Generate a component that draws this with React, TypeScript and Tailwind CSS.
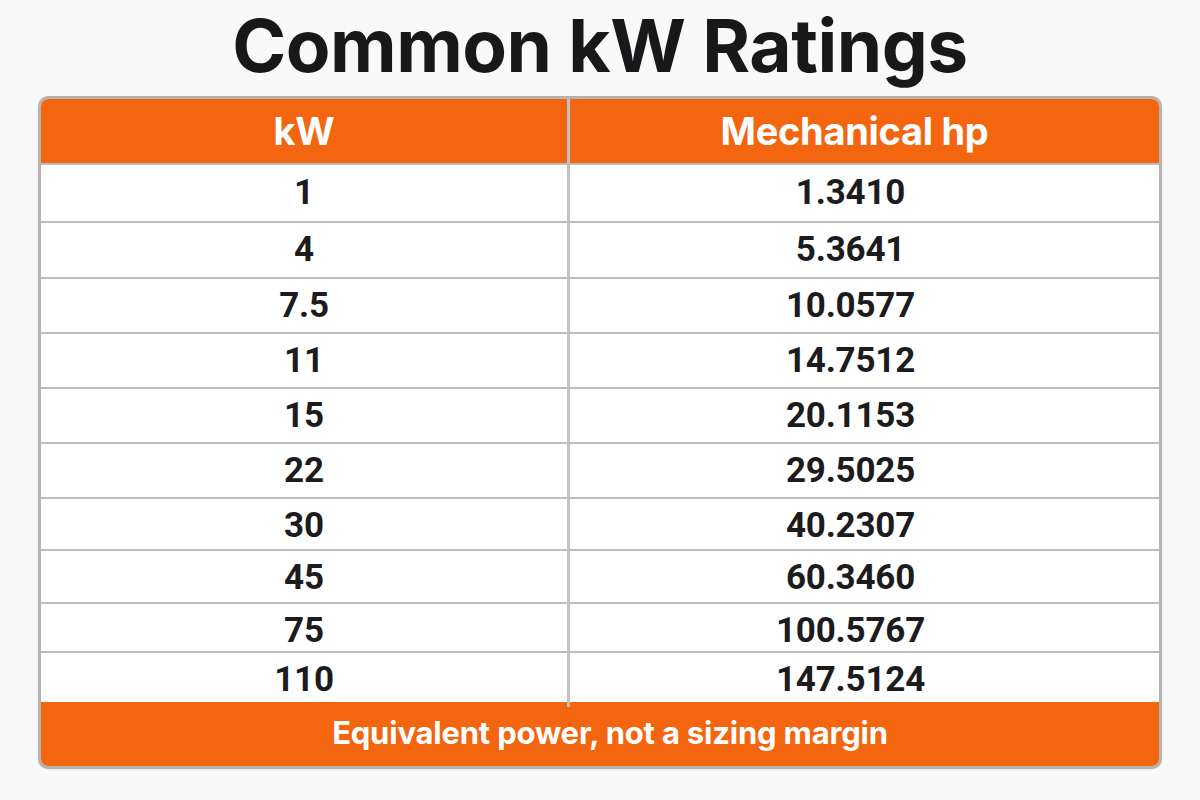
const rows = [
  { kw: '1', hp: '1.3410', h: 'h-[58px]' },
  { kw: '4', hp: '5.3641', h: 'h-[56px]' },
  { kw: '7.5', hp: '10.0577', h: 'h-[55px]' },
  { kw: '11', hp: '14.7512', h: 'h-[55px]' },
  { kw: '15', hp: '20.1153', h: 'h-[55px]' },
  { kw: '22', hp: '29.5025', h: 'h-[55px]' },
  { kw: '30', hp: '40.2307', h: 'h-[52px]' },
  { kw: '45', hp: '60.3460', h: 'h-[53px]' },
  { kw: '75', hp: '100.5767', h: 'h-[49px]' },
  { kw: '110', hp: '147.5124', h: 'h-[49px]' },
]

export default function App() {
  return (
    <div className="w-[1200px] h-[800px] bg-[#f9f9f9] flex flex-col items-center font-['Roboto',sans-serif]">
      {/* Title */}
      <h1 className="h-[96px] pt-[1px] text-[73px] leading-[90px] font-bold text-[#18181a] tracking-[-0.5px] font-['Inter',sans-serif]">
        Common kW Ratings
      </h1>

      {/* Table */}
      <div className="w-[1124px] border-[3px] border-[#b4b4b4] rounded-[10px] overflow-hidden bg-white shadow-[0_1px_2px_rgba(0,0,0,0.08)]">
        <div className="grid grid-cols-[526px_1fr] h-[66px] bg-[#f4650f] border-b-2 border-[#bdbdbd] text-white font-bold text-[38px] font-['Inter',sans-serif] tracking-[-0.3px]">
          <div className="flex items-center justify-center">kW</div>
          <div className="flex items-center justify-center border-l-[3px] border-[#c2c2c2] pr-[20px]">Mechanical hp</div>
        </div>

        {rows.map((r, i) => (
          <div
            key={r.kw}
            className={`grid grid-cols-[526px_1fr] ${r.h} ${i < rows.length - 1 ? 'border-b-2 border-[#bdbdbd]' : ''} text-[#1c1c1e] font-bold text-[35px] tracking-[-0.2px]`}
          >
            <div className="flex items-center justify-center pt-[1px]">{r.kw}</div>
            <div className="flex items-center justify-center pt-[1px] border-l-[3px] border-[#c2c2c2] pr-[28px]">{r.hp}</div>
          </div>
        ))}

        <div className="h-[64px] bg-[#f4650f] flex items-center justify-center text-white font-bold text-[31px] pb-[2px] pl-[20px] font-['Inter',sans-serif] tracking-[-0.2px]">
          Equivalent power, not a sizing margin
        </div>
      </div>
    </div>
  )
}
